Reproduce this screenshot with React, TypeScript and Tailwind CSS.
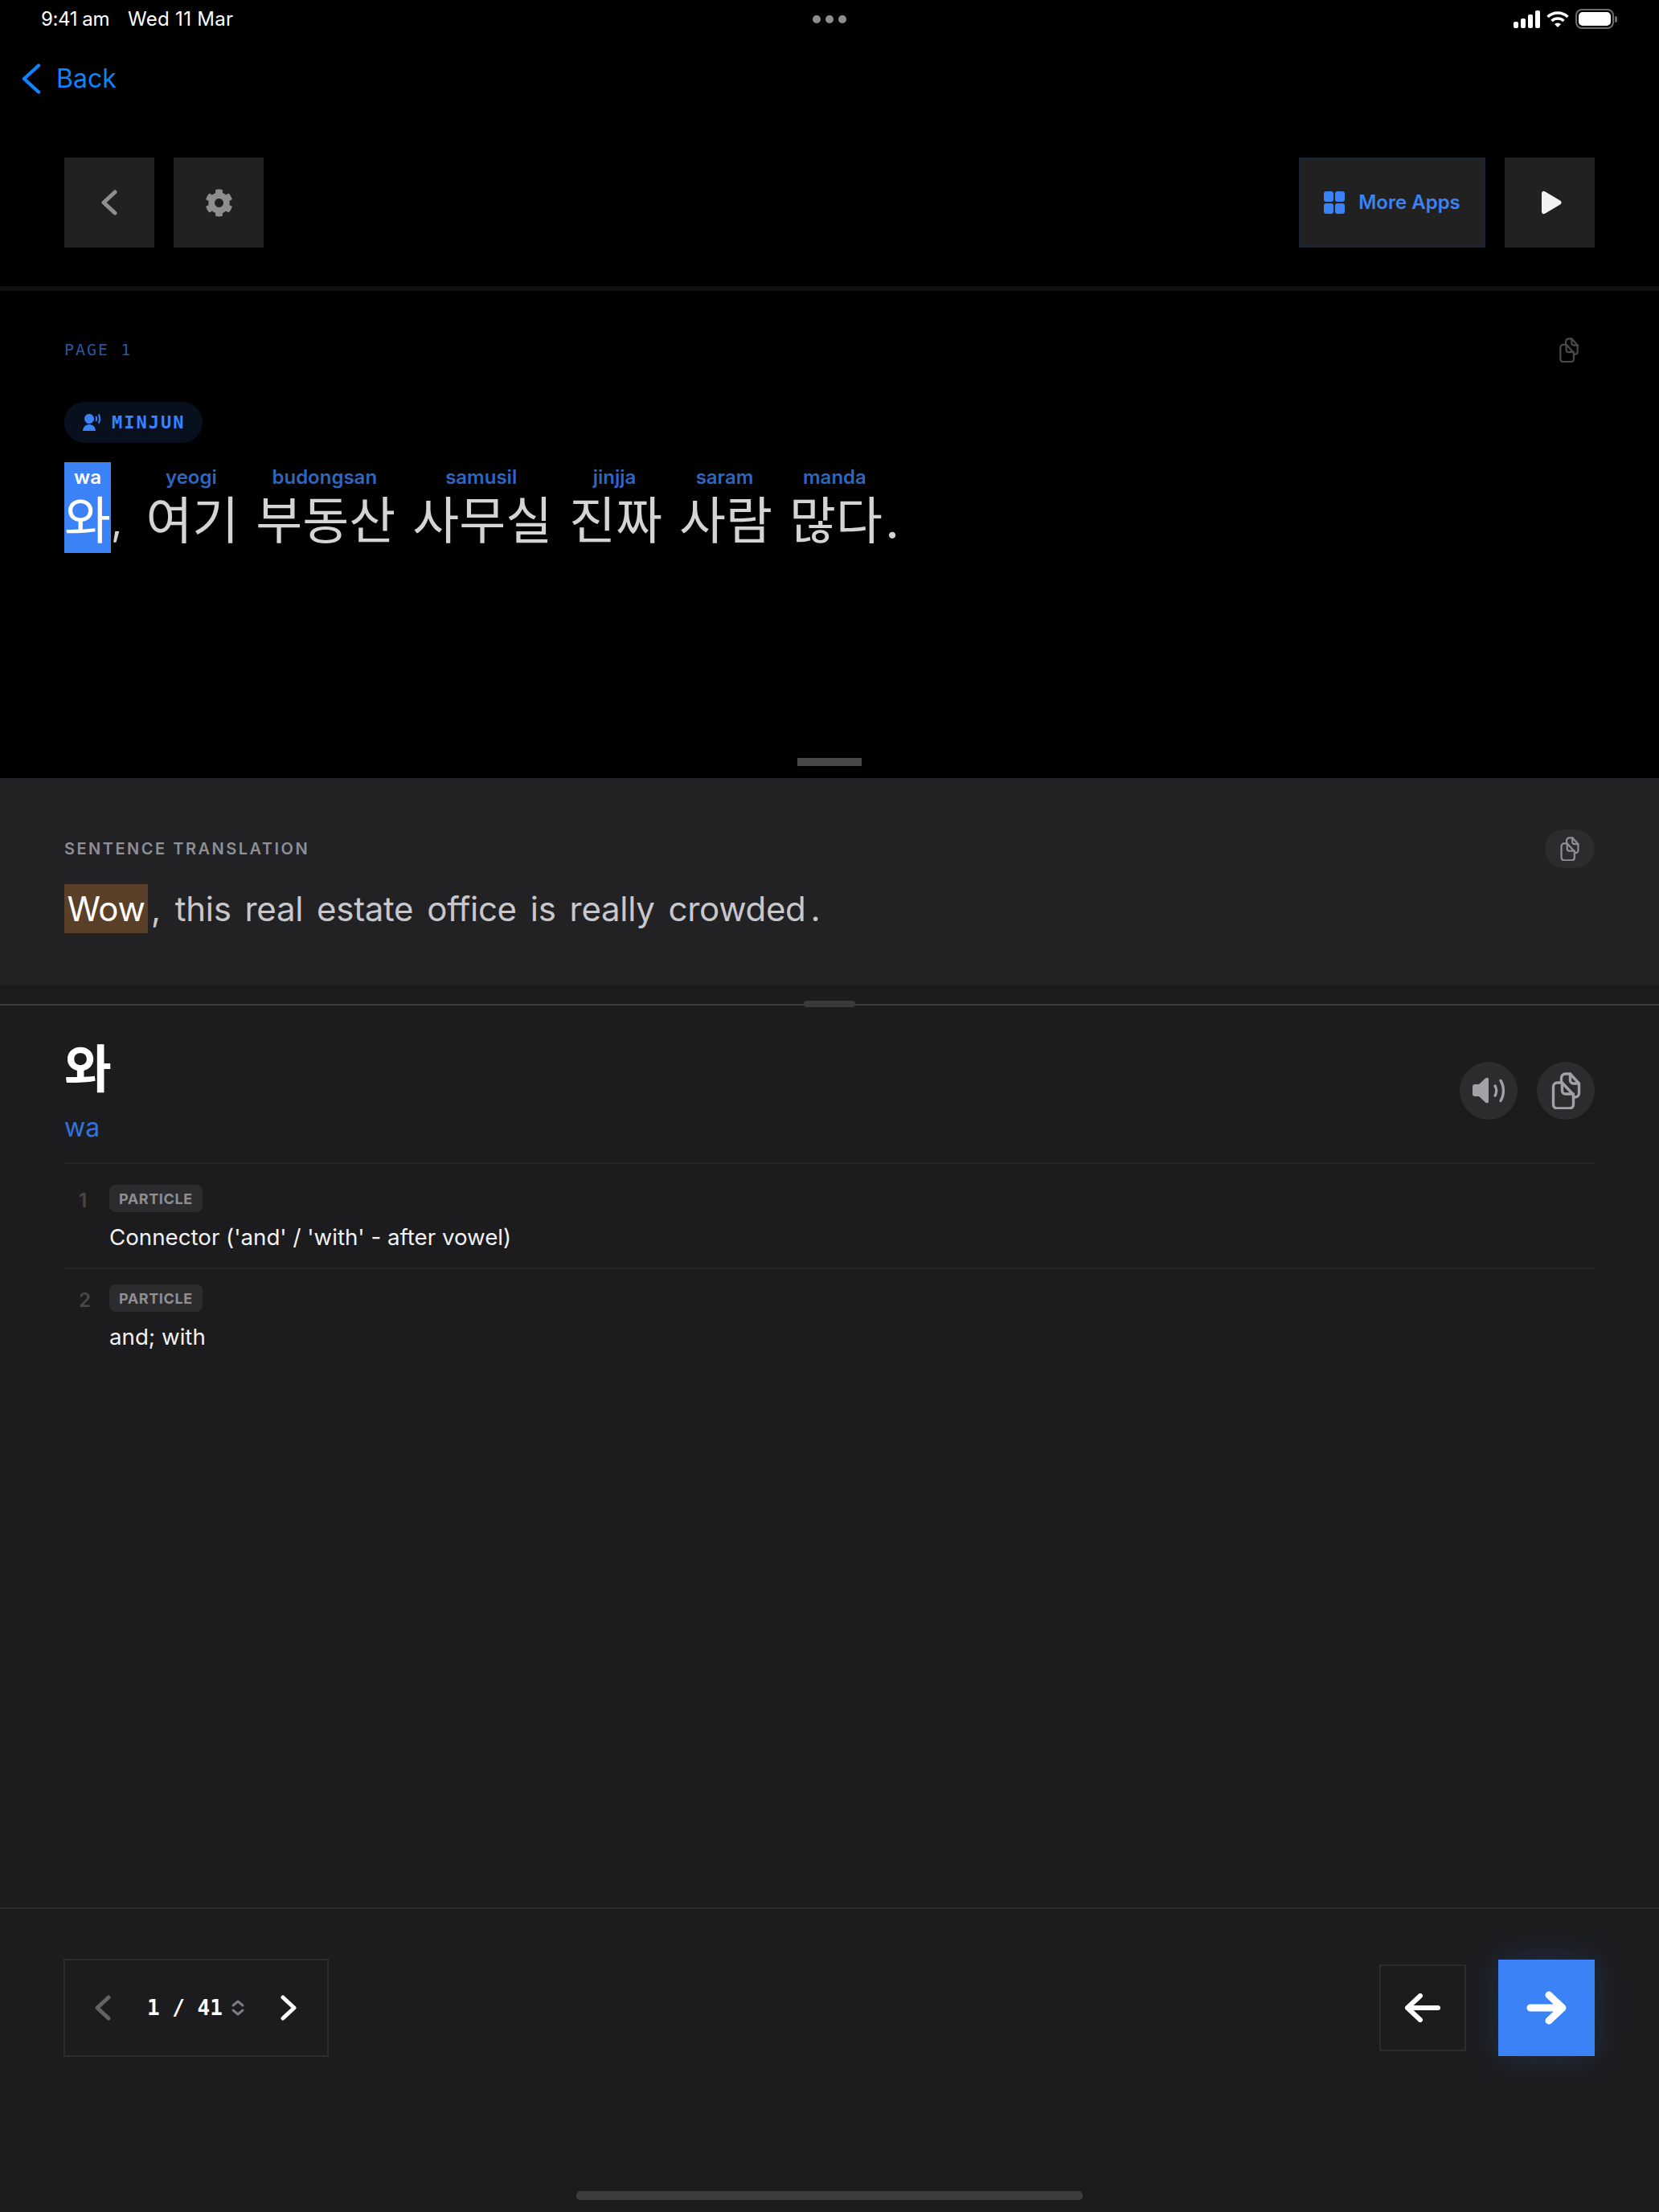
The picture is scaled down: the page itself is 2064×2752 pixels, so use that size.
import { FaCog } from 'react-icons/fa'
import { RiUserVoiceFill } from 'react-icons/ri'

const sans = 'font-["Inter","Noto_Sans_CJK_KR",sans-serif]'

const words = [
  { ko: '여기', rom: 'yeogi' },
  { ko: '부동산', rom: 'budongsan' },
  { ko: '사무실', rom: 'samusil' },
  { ko: '진짜', rom: 'jinjja' },
  { ko: '사람', rom: 'saram' },
  { ko: '많다', rom: 'manda' },
]

const english = ['this', 'real', 'estate', 'office', 'is', 'really', 'crowded']

const senses = [
  { n: 1, text: "Connector ('and' / 'with' - after vowel)" },
  { n: 2, text: 'and; with' },
]

function CopyIcon({ className }: { className: string }) {
  return (
    <svg viewBox="0 0 36 46" fill="none" stroke="currentColor" strokeWidth="3.4" strokeLinejoin="round" strokeLinecap="round" className={className}>
      <path d="M12 12V7a5 5 0 0 1 5-5h6l11 12v12a5 5 0 0 1-5 5h-2" />
      <path d="M23 2v8a4 4 0 0 0 4 4h7" />
      <path d="M2 18a5 5 0 0 1 5-5h6l14 15v12a5 5 0 0 1-5 5H7a5 5 0 0 1-5-5z" />
      <path d="M13 13v10a4 4 0 0 0 4 4h10" />
    </svg>
  )
}

function StatusBar() {
  return (
    <div className="relative h-12 shrink-0 flex items-center justify-between pl-[51px] pr-[52px]">
      <div className="flex gap-[23px] text-[24px] text-white">
        <span className="tracking-[-0.4px]">9:41 am</span>
        <span className="tracking-[0.3px]">Wed 11 Mar</span>
      </div>
      <div className="absolute left-[1011px] top-[19px] flex gap-[6px]">
        <span className="w-[10px] h-[10px] rounded-full bg-[#8e8e8e]" />
        <span className="w-[10px] h-[10px] rounded-full bg-[#8e8e8e]" />
        <span className="w-[10px] h-[10px] rounded-full bg-[#8e8e8e]" />
      </div>
      <div className="flex items-center gap-2">
        <svg viewBox="0 0 33 22" className="w-[33px] h-[22px] fill-white">
          <rect x="0" y="14" width="6" height="8" rx="2" />
          <rect x="9" y="10" width="6" height="12" rx="2" />
          <rect x="18" y="5" width="6" height="17" rx="2" />
          <rect x="27" y="0" width="6" height="22" rx="2" />
        </svg>
        <svg viewBox="0 0 28 22" className="w-7 h-[22px]" fill="none" stroke="white" strokeWidth="3.4">
          <path d="M1.5 8a18 18 0 0 1 25 0" />
          <path d="M6.5 13a11 11 0 0 1 15 0" />
          <path d="M14 21l-4-4a6 6 0 0 1 8 0z" fill="white" stroke="none" />
        </svg>
        <svg viewBox="0 0 52 26" className="w-[52px] h-[26px]">
          <rect x="1" y="1" width="46" height="23" rx="7" fill="none" stroke="#6b6b6b" strokeWidth="2" />
          <rect x="4" y="4" width="40" height="17" rx="5" fill="white" />
          <path d="M49 9a4 4 0 0 1 0 8z" fill="#6b6b6b" />
        </svg>
      </div>
    </div>
  )
}

export default function App() {
  return (
    <div className={`w-[2064px] h-[2752px] flex flex-col bg-[#1c1c1e] overflow-hidden ${sans}`}>
      {/* Reading pane */}
      <section className="relative h-[968px] shrink-0 flex flex-col bg-black">
        <StatusBar />
        <div className="h-[100px] shrink-0 flex items-center gap-[19px] pl-[27px] text-[#0a84ff] text-[32px]">
          <svg viewBox="0 0 24 38" fill="none" stroke="currentColor" strokeWidth="4.4" strokeLinecap="round" strokeLinejoin="round" className="w-[24px] h-[38px]">
            <path d="M21 2.5L3 19l18 16.500" />
          </svg>
          <span>Back</span>
        </div>

        {/* Toolbar */}
        <div className="h-[214px] shrink-0 pt-12 px-20 flex justify-between items-start border-b-[6px] border-[#111111]">
          <div className="flex gap-6">
            <div className="w-28 h-28 flex items-center justify-center bg-[#212121]">
              <svg viewBox="0 0 20 32" fill="none" stroke="#8e8e8e" strokeWidth="5" strokeLinecap="round" strokeLinejoin="round" className="w-5 h-8">
                <path d="M17 3L3 16l14 13" />
              </svg>
            </div>
            <div className="w-28 h-28 flex items-center justify-center bg-[#212121]">
              <FaCog className="w-[35px] h-[35px] text-[#8e8e8e]" />
            </div>
          </div>
          <div className="flex gap-6">
            <div className="w-[232px] h-28 flex items-center justify-center gap-[17px] bg-[#212121] border-2 border-[#172338]">
              <svg viewBox="0 0 26 28" className="w-[26px] h-[28px] fill-[#3b82f6]">
                <rect x="0" y="0" width="12" height="13" rx="3" />
                <rect x="14" y="0" width="12" height="13" rx="3" />
                <rect x="0" y="15" width="12" height="13" rx="3" />
                <rect x="14" y="15" width="12" height="13" rx="3" />
              </svg>
              <span className="text-[24px] font-semibold text-[#3b82f6]">More Apps</span>
            </div>
            <div className="w-28 h-28 flex items-center justify-center bg-[#212121]">
              <svg viewBox="0 0 26 30" className="w-[26px] h-[30px] ml-1 fill-[#f2f2f2]">
                <path d="M1 4c0-3 2-4 4.500-2.500l18.500 11c2 1.200 2 3.800 0 5l-18.500 11C3 30 1 29 1 26z" />
              </svg>
            </div>
          </div>
        </div>

        {/* Sentence */}
        <div className="px-20 pt-[53px] flex flex-col items-start">
          <div className="w-full h-10 flex items-center justify-between">
            <span className="font-['DejaVu_Sans_Mono',monospace] text-[20px] tracking-[2px] text-[#2a55a0]">PAGE 1</span>
            <CopyIcon className="w-[24px] h-[31px] mr-[20px] text-[#48484a]" />
          </div>
          <div className="mt-[45px] h-[51px] pl-[22px] pr-[22px] flex items-center gap-[13px] rounded-full bg-[#07101c] text-[#3b82f6]">
            <RiUserVoiceFill className="w-[24px] h-[24px]" />
            <span className="font-['DejaVu_Sans_Mono',monospace] text-[22px] font-bold tracking-[2px]">MINJUN</span>
          </div>
          <div className="mt-6 flex items-start text-[63px] leading-[80px] text-[#d4d4d4]">
            <div className="w-[58px] h-[113px] flex flex-col items-center bg-[#3b82f6] text-white">
              <span className="h-[36px] pt-px text-[24px] leading-[36px] font-semibold">wa</span>
              <span className="leading-[72px] whitespace-nowrap">와</span>
            </div>
            <span className="mt-[33px] text-[50px]">,</span>
            <div className="ml-[29px] flex gap-[21px]">
              {words.map((w) => (
                <div key={w.rom} className="flex flex-col items-center">
                  <span className="h-[36px] pt-px pr-[3px] text-[24px] leading-[36px] font-semibold text-[#2f66c0]">{w.rom}</span>
                  <span className="leading-[72px] whitespace-nowrap">{w.ko}</span>
                </div>
              ))}
            </div>
            <span className="mt-[36px] ml-[3px] leading-[72px]">.</span>
          </div>
        </div>

        <div className="absolute left-[992px] top-[943px] w-20 h-[10px] bg-[#48484a]" />
      </section>

      {/* Translation */}
      <section className="h-[257px] shrink-0 px-20 pt-16 bg-[#222224]">
        <div className="h-12 flex items-center justify-between">
          <span className="text-[20px] font-semibold tracking-[2.5px] text-[#8e8e93]">SENTENCE TRANSLATION</span>
          <div className="w-[62px] h-12 flex items-center justify-center rounded-full bg-[#2c2c2e] text-[#8e8e93]">
            <CopyIcon className="w-[24px] h-[30px]" />
          </div>
        </div>
        <div className="mt-5 flex items-center text-[42px] leading-[61px] tracking-[-0.3px] text-[#c7c7cc] whitespace-nowrap">
          <span className="w-[104px] h-[61px] text-center bg-[#5a4029] text-white">Wow</span>
          <span className="ml-1 mr-[18px]">,</span>
          <span className="flex gap-[17px]">
            {english.map((w) => (
              <span key={w}>{w}</span>
            ))}
          </span>
          <span className="ml-[6px]">.</span>
        </div>
      </section>

      {/* Dictionary */}
      <section className="relative flex-1 min-h-0 px-20 pt-[24px]">
        <div className="absolute left-0 right-0 top-6 h-[2px] bg-[#3a3a3c]" />
        <div className="absolute left-[1000px] top-5 w-16 h-2 rounded-full bg-[#3a3a3c]" />
        <div className="h-[199px] pt-[42px] flex justify-between border-b-2 border-[#262628]">
          <div className="flex flex-col">
            <span className="text-[64px] leading-[78px] font-bold text-white">와</span>
            <span className="mt-[14px] text-[32px] leading-[40px] text-[#3273dc]">wa</span>
          </div>
          <div className="flex gap-6 pt-[30px]">
            <div className="w-[72px] h-[72px] flex items-center justify-center rounded-full bg-[#2c2c2e]">
              <svg viewBox="0 0 42 34" className="w-[42px] h-[34px]" fill="none" stroke="#a1a1a6" strokeWidth="3.400" strokeLinecap="round">
                <path d="M21 3c0-2.500-2-3-4-1.500L9 9H4a3 3 0 0 0-3 3v9a3 3 0 0 0 3 3h5l8 7.500c2 1.500 4 1 4-1.500z" fill="#a1a1a6" stroke="none" />
                <path d="M29 11c2.200 3.500 2.200 8.500 0 12" />
                <path d="M36 4.500c4.500 7 4.500 18 0 25" />
              </svg>
            </div>
            <div className="w-[72px] h-[72px] flex items-center justify-center rounded-full bg-[#2c2c2e] text-[#a1a1a6]">
              <CopyIcon className="w-[37px] h-[46px]" />
            </div>
          </div>
        </div>
        {senses.map((s) => (
          <div key={s.n} className={`flex gap-[25px] pl-[18px] h-[131px] ${s.n === 1 ? 'pt-[26px] border-b-2 border-[#262628]' : 'pt-[19px]'}`}>
            <span className="w-[13px] mt-[3px] text-[24px] leading-[34px] font-semibold text-[#48484a]">{s.n}</span>
            <div className="flex flex-col items-start">
              <span className="h-[34px] px-3 flex items-center rounded-lg bg-[#2c2c2e] text-[18px] font-bold tracking-[0.6px] text-[#8e8e93]">PARTICLE</span>
              <span className="mt-[13px] text-[27.7px] leading-[36px] text-[#f2f2f2]">{s.text}</span>
            </div>
          </div>
        ))}
      </section>

      {/* Footer */}
      <footer className="relative h-[379px] shrink-0 px-20 pt-[63px] flex justify-between items-start border-t-2 border-[#2c2c2e]">
        <div className="w-[330px] h-[122px] -ml-px -mt-px flex items-center pl-[37px] border-2 border-[#2c2c2e]">
          <svg viewBox="0 0 20 32" fill="none" stroke="#636366" strokeWidth="5" strokeLinecap="round" strokeLinejoin="round" className="w-5 h-8">
            <path d="M17 3L3 16l14 13" />
          </svg>
          <span className="ml-[45px] font-['DejaVu_Sans_Mono',monospace] font-bold text-[26px] text-white whitespace-pre">1 / 41</span>
          <svg viewBox="0 0 18 22" fill="none" stroke="#7c7c80" strokeWidth="3" strokeLinecap="round" strokeLinejoin="round" className="ml-[10px] w-[18px] h-[22px]">
            <path d="M3 8l6-5 6 5M3 14l6 5 6-5" />
          </svg>
          <svg viewBox="0 0 20 32" fill="none" stroke="white" strokeWidth="5" strokeLinecap="round" strokeLinejoin="round" className="ml-[44px] w-5 h-8">
            <path d="M3 3l14 13L3 29" />
          </svg>
        </div>
        <div className="flex items-center gap-10">
          <div className="w-[108px] h-[108px] flex items-center justify-center border-2 border-[#2c2c2e]">
            <svg viewBox="0 0 44 36" fill="none" stroke="white" strokeWidth="6" strokeLinecap="round" strokeLinejoin="round" className="w-[44px] h-[36px]">
              <path d="M41 18H3M19 3L3 18l16 15" />
            </svg>
          </div>
          <div className="w-[120px] h-[120px] flex items-center justify-center bg-[#3b82f6] shadow-[0_0_40px_rgba(59,130,246,0.2)]">
            <svg viewBox="0 0 50 42" fill="none" stroke="white" strokeWidth="9" strokeLinecap="round" strokeLinejoin="round" className="w-[50px] h-[42px]">
              <path d="M5 21h40M28 5l17 16-17 16" />
            </svg>
          </div>
        </div>
        <div className="absolute left-[717px] top-[351px] w-[630px] h-[11px] rounded-[5px] bg-[#3d3d3d]" />
      </footer>
    </div>
  )
}
